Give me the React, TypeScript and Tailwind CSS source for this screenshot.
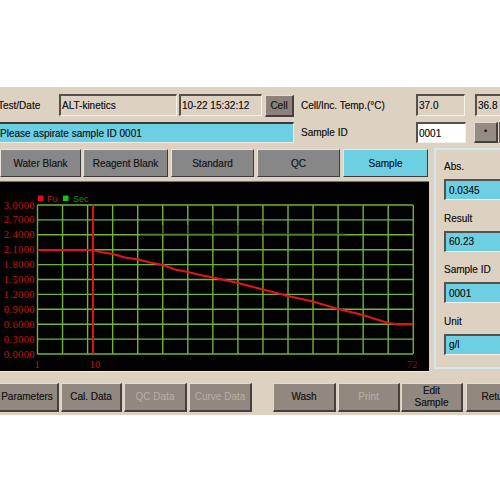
import React from "react";

const inset =
  "border-t-2 border-l-2 border-t-[#55504a] border-l-[#55504a] border-b border-r border-b-[#f6f1ea] border-r-[#f6f1ea]";
const raised =
  "border-t border-l border-t-[#e2dad2] border-l-[#e2dad2] border-b-2 border-r-2 border-b-[#45403b] border-r-[#45403b]";

function Chart() {
  const xs = Array.from({ length: 16 }, (_, i) => 37.5 + 25.05 * i);
  const top = 23;
  const bottom = 172;
  const step = (bottom - top) / 10;
  const ys = Array.from({ length: 11 }, (_, i) => top + step * i);
  const labels = [
    "3.0000",
    "2.7000",
    "2.4000",
    "2.1000",
    "1.8000",
    "1.5000",
    "1.2000",
    "0.9000",
    "0.6000",
    "0.3000",
    "0.0000",
  ];
  const curve = [
    [37.5, 68],
    [93, 68],
    [100, 70],
    [113, 72],
    [125, 75.5],
    [138, 77.5],
    [150, 80.5],
    [163, 83],
    [175, 87.5],
    [188, 90],
    [200, 93],
    [213, 95.5],
    [238, 101],
    [263, 107.5],
    [288, 114],
    [313, 119.5],
    [338, 127],
    [363, 133],
    [388, 141],
    [398, 142.5],
    [413, 142.5],
  ];
  const serif = "'Liberation Serif', 'Times New Roman', serif";
  return (
    <svg width="429" height="191" viewBox="0 0 429 191" className="block">
      <rect x="0" y="0" width="429" height="191" fill="#020202" />
      {ys.map((y, i) => (
        <line key={"h" + i} x1={37.5} x2={413} y1={y} y2={y} stroke="#71b33c" strokeWidth="1.4" />
      ))}
      {xs.map((x, i) => (
        <line key={"v" + i} x1={x} x2={x} y1={top} y2={bottom} stroke="#71b33c" strokeWidth="1.4" />
      ))}
      <line x1={140} x2={345} y1={52} y2={52} stroke="#2f4a22" strokeWidth="1" />
      {[163, 188, 213, 238, 263].map((x) => (
        <line key={"t" + x} x1={x} x2={x} y1={43} y2={52} stroke="#2f4a22" strokeWidth="1.2" />
      ))}
      <line x1={93} x2={93} y1={top} y2={bottom} stroke="#e01212" strokeWidth="2" />
      <polyline
        points={curve.map((p) => p.join(",")).join(" ")}
        fill="none"
        stroke="#e51515"
        strokeWidth="2"
      />
      {labels.map((l, i) => (
        <text
          key={"l" + i}
          x={35}
          y={ys[i] + 3.5}
          textAnchor="end"
          fontSize="10.5"
          letterSpacing="0.4"
          fill="#cc1212"
          fontFamily={serif}
        >
          {l}
        </text>
      ))}
      <text x={37} y={186} textAnchor="middle" fontSize="10.5" fill="#cc1212" fontFamily={serif}>
        1
      </text>
      <text x={95} y={186} textAnchor="middle" fontSize="10.5" fill="#cc1212" fontFamily={serif}>
        10
      </text>
      <text x={412} y={186} textAnchor="middle" fontSize="10.5" fill="#9a0c0c" fontFamily={serif}>
        72
      </text>
      <rect x={38} y={13.5} width={5.5} height={5.5} fill="#e01010" />
      <text x={47} y={19.5} fontSize="9" fill="#c41010" fontFamily="'Liberation Sans', Arial, sans-serif">
        Fu
      </text>
      <rect x={63} y={13.5} width={5.5} height={5.5} fill="#18c018" />
      <text x={73} y={19.5} fontSize="9" fill="#139013" fontFamily="'Liberation Sans', Arial, sans-serif">
        Sec
      </text>
    </svg>
  );
}

function Tab({ w, label, active }: { w: string; label: string; active?: boolean }) {
  return (
    <div
      className={`${w} shrink-0 h-full flex items-center justify-center border-t border-l border-t-[#ece4da] border-l-[#ece4da] border-b border-r border-b-[#3c3c3c] border-r-[#3c3c3c] ${
        active ? "bg-[#6ccfe2]" : "bg-[#878787]"
      }`}
    >
      {label}
    </div>
  );
}

function BottomBtn({
  w,
  ml,
  label,
  disabled,
}: {
  w: string;
  ml: string;
  label: React.ReactNode;
  disabled?: boolean;
}) {
  return (
    <div
      className={`${w} ${ml} shrink-0 h-full bg-[#918880] ${raised} flex items-center justify-center text-center leading-[12px] ${
        disabled ? "text-[#b9b0a7] [text-shadow:none]" : "text-[#1a1a1a]"
      }`}
    >
      {label}
    </div>
  );
}

function Field({ label, value }: { label: string; value: string }) {
  return (
    <div className="flex flex-col">
      <div className="h-[14px] leading-[14px]">{label}</div>
      <div className={`mt-[5px] h-[21px] w-[70px] bg-[#6ccfe2] ${inset} flex items-center pl-[3px]`}>{value}</div>
    </div>
  );
}

export default function App() {
  return (
    <div className="w-[500px] h-[500px] bg-white overflow-hidden font-['Liberation_Sans',Arial,sans-serif] text-[10px] text-[#1c1c1c] [text-shadow:0_0_0.6px_rgba(0,0,0,0.55)]">
      <div className="mt-[87px] h-[328px] bg-[#ddd1c1] flex flex-col pt-[7px] overflow-hidden">
        {/* Row 1 */}
        <div className="flex h-[22px] items-stretch">
          <div className="ml-[-2px] w-[61px] shrink-0 flex items-center">Test/Date</div>
          <div className={`w-[118px] shrink-0 ${inset} flex items-center pl-[1px]`}>ALT-kinetics</div>
          <div className={`ml-[2px] w-[83px] shrink-0 ${inset} flex items-center pl-[1px]`}>10-22 15:32:12</div>
          <div
            className={`ml-[3px] w-[29px] shrink-0 h-[22px] mt-[1px] bg-[#8c8279] ${raised} flex items-center justify-center`}
          >
            Cell
          </div>
          <div className="w-[122px] shrink-0 pl-[7px] flex items-center">Cell/Inc. Temp.(°C)</div>
          <div className={`w-[49px] shrink-0 ${inset} flex items-center pl-[1px]`}>37.0</div>
          <div className={`ml-[10px] w-[50px] shrink-0 ${inset} flex items-center pl-[1px]`}>36.8</div>
        </div>
        {/* Row 2 */}
        <div className="flex h-[21px] mt-[6px] items-stretch">
          <div className="ml-[-2px] w-[296px] shrink-0 bg-[#6ccfe2] border-t-2 border-t-[#3a3a3a] border-b border-b-[#f0ebe4] border-r border-r-[#f0ebe4] flex items-center pl-[2px]">
            Please aspirate sample ID 0001
          </div>
          <div className="w-[122px] shrink-0 pl-[7px] flex items-center">Sample ID</div>
          <div className={`w-[50px] shrink-0 bg-white ${inset} flex items-center pl-[1px]`}>0001</div>
          <div className={`ml-[8px] w-[24px] shrink-0 bg-[#958b82] ${raised} flex items-center justify-center text-[9px]`}>
            •
          </div>
          <div className="ml-[1px] w-[10px] shrink-0 bg-[#6d655e]" />
        </div>
        {/* Row 3: tabs + chart + side panel */}
        <div className="flex mt-[5px]">
          <div className="w-[429px] shrink-0 flex flex-col pt-[1px]">
            <div className="flex h-[28px]">
              <Tab w="w-[81px]" label="Water Blank" />
              <div className="w-[2px] shrink-0" />
              <Tab w="w-[85px]" label="Reagent Blank" />
              <div className="w-[3px] shrink-0" />
              <Tab w="w-[83px]" label="Standard" />
              <div className="w-[3px] shrink-0" />
              <Tab w="w-[83px]" label="QC" />
              <div className="w-[3px] shrink-0" />
              <Tab w="w-[85px]" label="Sample" active />
            </div>
            <div className="mt-[4px] h-[191px] border-t border-t-[#77716b] border-b border-b-[#f2ede6] overflow-hidden">
              <Chart />
            </div>
          </div>
          <div className="ml-[5px] w-[80px] shrink-0 h-[221px] border-l-2 border-t-2 border-b-2 border-[#d3e6ee] pl-[8px] pt-[10px] flex flex-col gap-[11.5px]">
            <Field label="Abs." value="0.0345" />
            <Field label="Result" value="60.23" />
            <Field label="Sample ID" value="0001" />
            <Field label="Unit" value="g/l" />
          </div>
        </div>
        {/* Bottom buttons */}
        <div className="flex h-[29px] mt-[11px]">
          <BottomBtn w="w-[63px]" ml="ml-[-4px]" label="Parameters" />
          <BottomBtn w="w-[61px]" ml="ml-[2px]" label="Cal. Data" />
          <BottomBtn w="w-[63px]" ml="ml-[2px]" label="QC Data" disabled />
          <BottomBtn w="w-[63px]" ml="ml-[2px]" label="Curve Data" disabled />
          <BottomBtn w="w-[63px]" ml="ml-[21px]" label="Wash" />
          <BottomBtn w="w-[62px]" ml="ml-[2px]" label="Print" disabled />
          <BottomBtn
            w="w-[62px]"
            ml="ml-[1px]"
            label={
              <span>
                Edit
                <br />
                Sample
              </span>
            }
          />
          <BottomBtn w="w-[62px]" ml="ml-[3px]" label="Return" />
        </div>
      </div>
    </div>
  );
}
